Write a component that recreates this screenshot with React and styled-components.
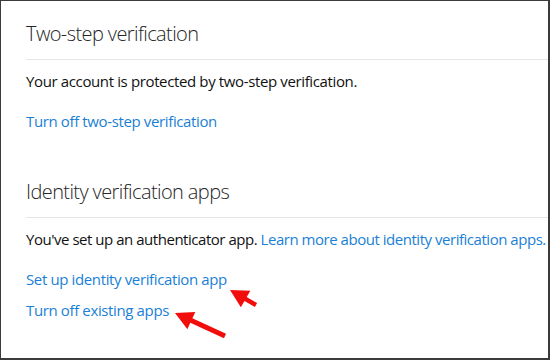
import styled, { createGlobalStyle } from "styled-components";

const GlobalStyle = createGlobalStyle`
    html, body {
        margin: 0;
        padding: 0;
        background: #ffffff;
    }
    * {
        box-sizing: border-box;
    }
`;

const arrows = [
    { tip: [230, 290], tail: [256, 305], width: 4.5 },
    { tip: [175, 313], tail: [225, 336], width: 5 },
];

// seta com cabeça triangular, calculada a partir da ponta e da cauda
const arrowPoints = ({ tip, tail, width }) => {
    const dx = tail[0] - tip[0];
    const dy = tail[1] - tip[1];
    const len = Math.hypot(dx, dy);
    const ux = dx / len;
    const uy = dy / len;
    const px = -uy;
    const py = ux;
    const headLen = 18;
    const headHalf = 9.5;
    const hw = width / 2;
    const base = [tip[0] + ux * headLen, tip[1] + uy * headLen];
    const pts = [
        tip,
        [base[0] + px * headHalf, base[1] + py * headHalf],
        [base[0] + px * hw, base[1] + py * hw],
        [tail[0] + px * hw, tail[1] + py * hw],
        [tail[0] - px * hw, tail[1] - py * hw],
        [base[0] - px * hw, base[1] - py * hw],
        [base[0] - px * headHalf, base[1] - py * headHalf],
    ];
    return pts.map((p) => p.join(",")).join(" ");
};

const App = () => {
    return (
        <>
            <GlobalStyle />
            <Frame>
                <Section>
                    <Heading>Two-step verification</Heading>
                    <Divider />
                    <Text>Your account is protected by two-step verification.</Text>
                    <Links>
                        <Link href="#">Turn off two-step verification</Link>
                    </Links>
                </Section>
                <Section $top={47}>
                    <Heading>Identity verification apps</Heading>
                    <Divider />
                    <Text $tight>
                        You've set up an authenticator app.{" "}
                        <Link href="#">Learn more about identity verification apps.</Link>
                    </Text>
                    <Links>
                        <Link href="#">Set up identity verification app</Link>
                        <Link href="#">Turn off existing apps</Link>
                    </Links>
                </Section>
                <Overlay width="550" height="360" viewBox="0 0 550 360">
                    {arrows.map((a, i) => (
                        <polygon key={i} points={arrowPoints(a)} fill="#f20d0d" />
                    ))}
                </Overlay>
            </Frame>
        </>
    );
};

const Frame = styled.div`
    position: relative;
    width: 550px;
    height: 360px;
    overflow: hidden;
    border-style: solid;
    border-color: #3b3b3b;
    border-width: 1px 2px 2px 1px;
    background: #ffffff;
    padding-top: 19px;
    font-family: "Open Sans", "Noto Sans", sans-serif;
    display: flex;
    flex-direction: column;
`;

const Section = styled.section`
    padding-left: 25px;
    margin-top: ${(props) => props.$top || 0}px;
    display: flex;
    flex-direction: column;
`;

const Heading = styled.h2`
    margin: 0;
    font-size: 20px;
    line-height: 28px;
    font-weight: 300;
    letter-spacing: -0.6px;
    color: #262626;
    white-space: nowrap;
`;

const Divider = styled.hr`
    margin: 11px 0 11px 0;
    border: none;
    height: 1px;
    background: #e6e6e6;
`;

const Text = styled.p`
    margin: 0;
    font-size: 15px;
    line-height: 20px;
    letter-spacing: ${(props) => (props.$tight ? "-0.47px" : "-0.37px")};
    color: #111111;
    white-space: nowrap;
`;

const Links = styled.div`
    margin-top: 20px;
    display: flex;
    flex-direction: column;
    align-items: flex-start;
    gap: 11px;
    letter-spacing: -0.37px;
`;

const Link = styled.a`
    font-size: 15px;
    line-height: 20px;
    letter-spacing: inherit;
    color: #1a7fd6;
    text-decoration: none;
    white-space: nowrap;
`;

const Overlay = styled.svg`
    position: absolute;
    left: -1px;
    top: -1px;
    pointer-events: none;
`;

export default App;
